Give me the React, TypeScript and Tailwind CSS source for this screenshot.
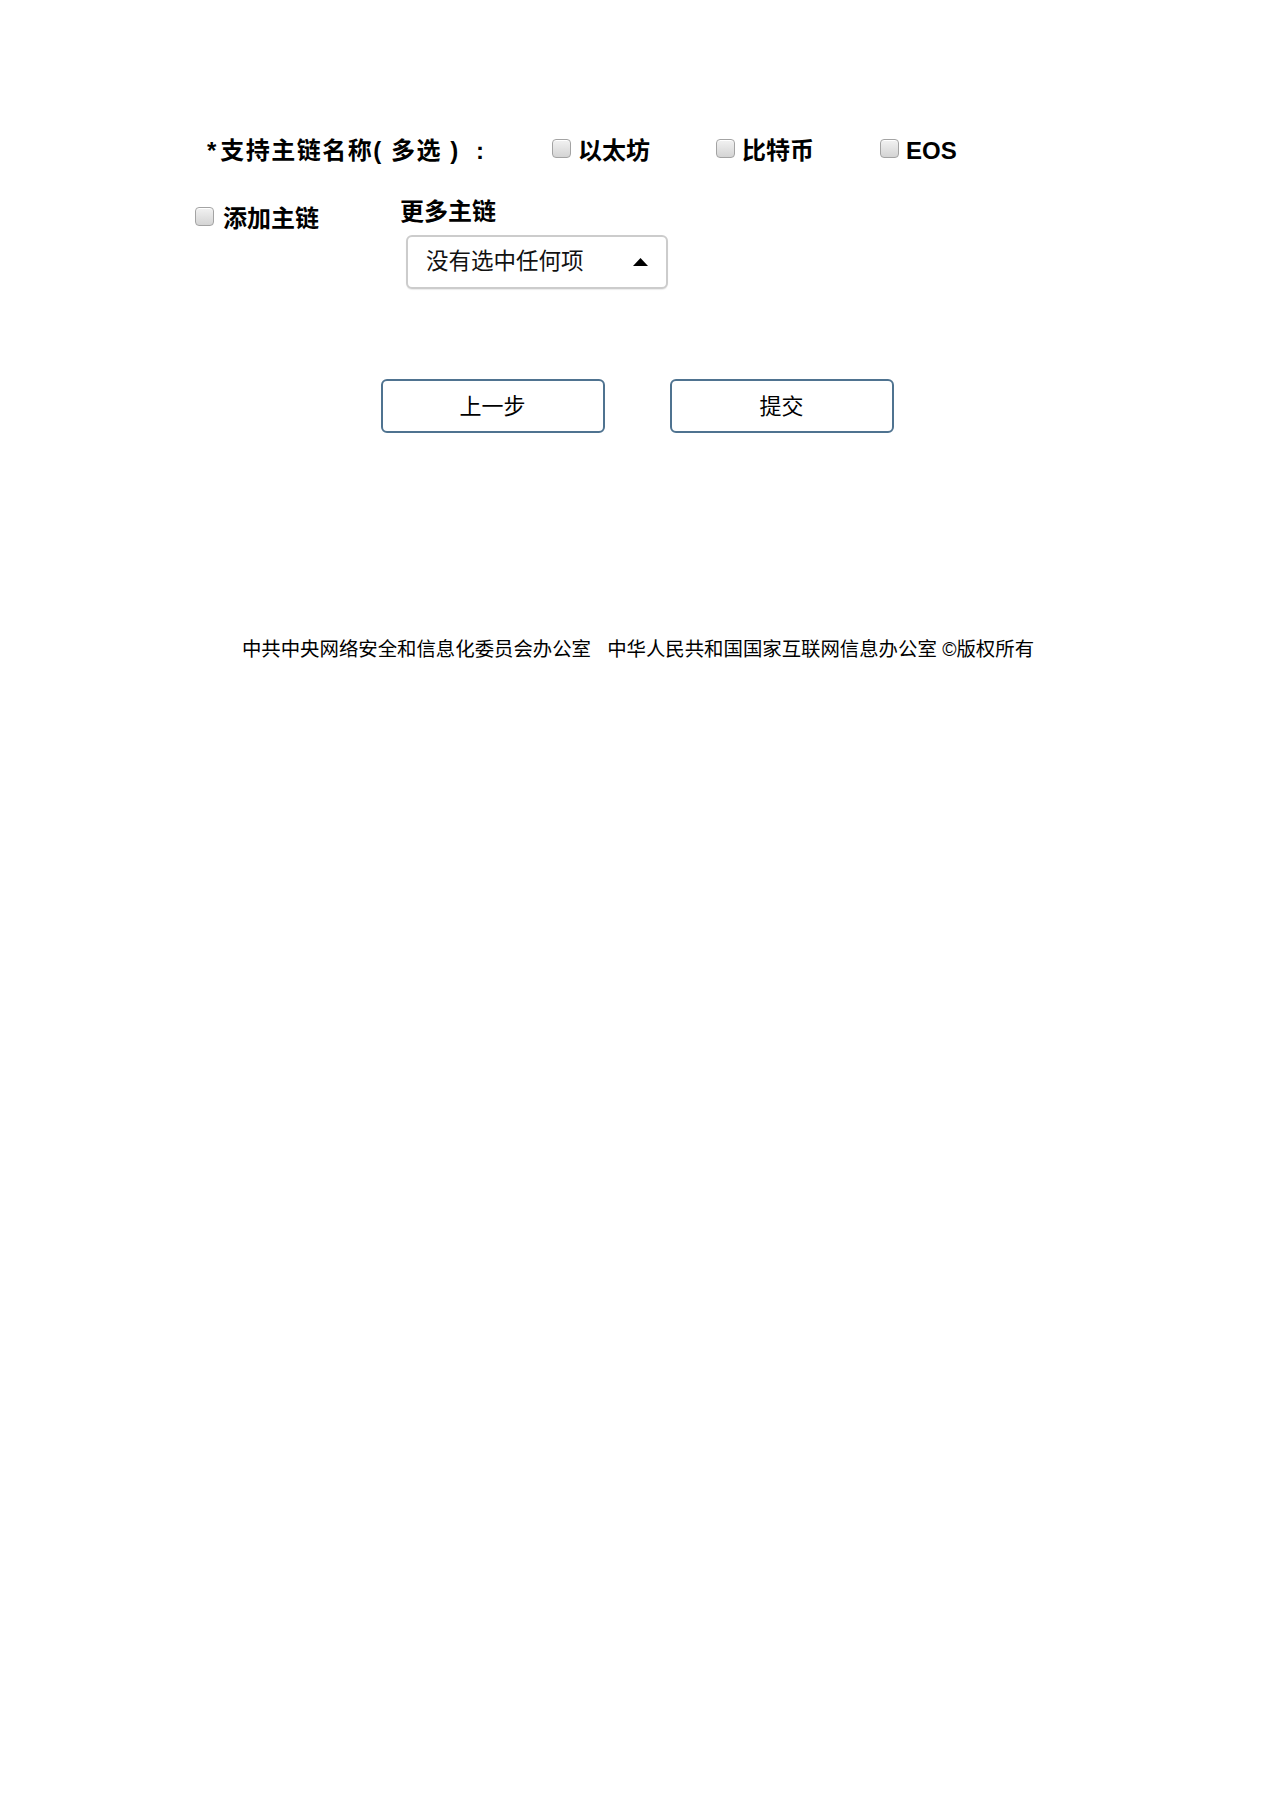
import React from "react";

const font = { fontFamily: '"Liberation Sans", Arial, "Noto Sans CJK SC", sans-serif' };

function Box() {
  return (
    <span className="inline-block w-[19px] h-[19px] shrink-0 rounded-[4px] border border-[#a3a3a3] bg-gradient-to-b from-[#f2f2f2] to-[#d4d4d4] shadow-[inset_0_1px_0_#ffffff]" />
  );
}

function Option({ label }: { label: string }) {
  return (
    <label className="flex items-center w-[164px]">
      <span className="-mt-[6px] flex">
        <Box />
      </span>
      <span className="ml-[7px] text-[24px] font-bold leading-[28px] text-black">{label}</span>
    </label>
  );
}

export default function App() {
  return (
    <div className="min-h-[1796px] bg-white text-black" style={font}>
      {/* Row 1 */}
      <div className="pt-[137px] pl-[207px] flex items-center h-[165px] box-border">
        <div className="w-[345px] flex items-center text-[24px] font-bold leading-[28px] whitespace-pre">
          <span>*</span>
          <span className="ml-[4px] tracking-[1.5px]">支持主链名称( 多选 )  :</span>
        </div>
        <Option label="以太坊" />
        <Option label="比特币" />
        <Option label="EOS" />
      </div>

      {/* Row 2 */}
      <div className="pl-[195px] mt-[33px] flex items-start">
        <label className="w-[205px] flex items-center mt-[7px]">
          <span className="-mt-[5px] flex">
            <Box />
          </span>
          <span className="ml-[9px] text-[24px] font-bold leading-[28px]">添加主链</span>
        </label>
        <div className="flex flex-col">
          <div className="text-[24px] font-bold leading-[28px]">更多主链</div>
          <div className="ml-[6px] mt-[9px] w-[262px] h-[54px] rounded-[6px] border-2 border-[#cccccc] bg-white flex items-center justify-between pl-[18px] pr-[18px] shadow-[0_1px_1px_rgba(0,0,0,0.08)]">
            <span className="text-[22.5px] leading-[28px] text-[#111111]">没有选中任何项</span>
            <svg width="15" height="8" viewBox="0 0 15 8">
              <path d="M7.5 0 L15 8 L0 8 Z" fill="#000000" />
            </svg>
          </div>
        </div>
      </div>

      {/* Buttons */}
      <div className="mt-[90px] flex justify-center gap-[65px] pl-[4px]">
        <button className="w-[224px] h-[54px] rounded-[6px] border-2 border-[#4f7390] bg-white text-[22px] text-black">
          上一步
        </button>
        <button className="w-[224px] h-[54px] rounded-[6px] border-2 border-[#4f7390] bg-white text-[22px] text-black">
          提交
        </button>
      </div>

      {/* Footer */}
      <div className="mt-[202px] text-center pl-[6px] text-[19.4px] leading-[28px] text-black whitespace-nowrap">
        中共中央网络安全和信息化委员会办公室&nbsp;&nbsp;&nbsp;中华人民共和国国家互联网信息办公室 ©版权所有
      </div>
    </div>
  );
}
